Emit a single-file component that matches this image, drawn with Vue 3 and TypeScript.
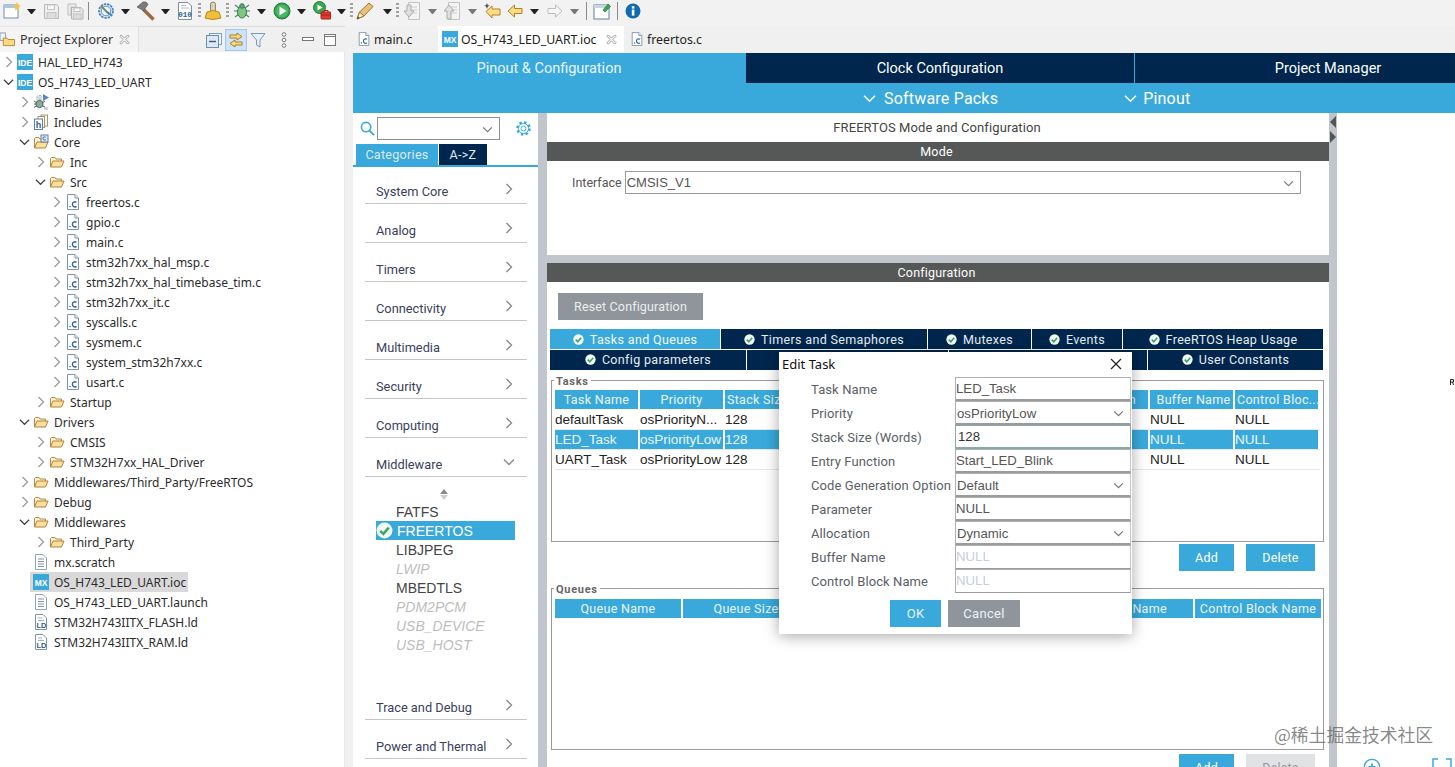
<script setup lang="ts">
const raw: [string, number, number?, number?][] = [
  ['i-new', 12, 18, 18], ['arrow', 31], ['i-save', 51, 17, 17], ['i-saveall', 75, 17, 17], ['sep', 88],
  ['i-cfg', 106, 18, 18], ['arrow', 125], ['i-hammer', 146, 20, 20], ['arrow', 165], ['i-bin', 185, 16, 18], ['dots', 199],
  ['i-lamp', 213, 18, 20], ['dots', 227], ['i-bug', 242, 18, 18], ['arrow', 261], ['i-run', 282, 18, 18], ['arrow', 301],
  ['i-ext', 322, 18, 20], ['arrow', 341], ['dots', 351], ['i-pencil', 365, 18, 18], ['arrow', 387], ['dots', 397],
  ['i-down', 412, 16, 18], ['arrow-off', 432], ['i-up', 452, 16, 18], ['arrow-off', 472], ['i-backstar', 492, 18, 16],
  ['i-back', 515, 16, 14], ['arrow', 534], ['i-fwd', 555, 16, 14], ['arrow-off', 574], ['sep', 586], ['i-win', 602, 18, 18], ['sep', 617], ['i-info', 633, 16, 16],
]
let prev = 0
const tools = raw.map(([id, x, w, h]) => {
  const kind = id.startsWith('arrow') ? id : id === 'sep' ? 'sep' : id === 'dots' ? 'dots' : 'icon'
  const width = kind === 'icon' ? (w as number) : kind === 'sep' ? 1 : kind === 'dots' ? 3 : 9
  const ml = x - width / 2 - prev
  prev = x + width / 2
  return { id, kind, width, height: h ?? 14, ml }
})

const viewIcons = [
  { id: 'i-collapse', on: false }, { id: 'i-link', on: true }, { id: 'i-filter', on: false },
  { id: 'i-kebab', on: false }, { id: 'i-min', on: false }, { id: 'i-max', on: false },
]

type Row = [number, string, string, string, boolean?]
const tree: Row[] = [
  [0, 'c', 'i-ide', 'HAL_LED_H743'], [0, 'o', 'i-ide', 'OS_H743_LED_UART'],
  [1, 'c', 'i-binaries', 'Binaries'], [1, 'c', 'i-includes', 'Includes'], [1, 'o', 'i-srcfolder', 'Core'],
  [2, 'c', 'i-folder', 'Inc'], [2, 'o', 'i-folder', 'Src'],
  [3, 'c', 'i-cfile', 'freertos.c'], [3, 'c', 'i-cfile', 'gpio.c'], [3, 'c', 'i-cfile', 'main.c'],
  [3, 'c', 'i-cfile', 'stm32h7xx_hal_msp.c'], [3, 'c', 'i-cfile', 'stm32h7xx_hal_timebase_tim.c'],
  [3, 'c', 'i-cfile', 'stm32h7xx_it.c'], [3, 'c', 'i-cfile', 'syscalls.c'], [3, 'c', 'i-cfile', 'sysmem.c'],
  [3, 'c', 'i-cfile', 'system_stm32h7xx.c'], [3, 'c', 'i-cfile', 'usart.c'],
  [2, 'c', 'i-folder', 'Startup'], [1, 'o', 'i-folder', 'Drivers'],
  [2, 'c', 'i-folder', 'CMSIS'], [2, 'c', 'i-folder', 'STM32H7xx_HAL_Driver'],
  [1, 'c', 'i-folder', 'Middlewares/Third_Party/FreeRTOS'], [1, 'c', 'i-folder', 'Debug'], [1, 'o', 'i-folder', 'Middlewares'],
  [2, 'c', 'i-folder', 'Third_Party'],
  [1, 'n', 'i-doc', 'mx.scratch'], [1, 'n', 'i-mx', 'OS_H743_LED_UART.ioc', true], [1, 'n', 'i-doc', 'OS_H743_LED_UART.launch'],
  [1, 'n', 'i-ld', 'STM32H743IITX_FLASH.ld'], [1, 'n', 'i-ld', 'STM32H743IITX_RAM.ld'],
]

const catsTop = ['System Core', 'Analog', 'Timers', 'Connectivity', 'Multimedia', 'Security', 'Computing']
const mids = [
  { t: 'FATFS', s: '' }, { t: 'FREERTOS', s: 'sel' }, { t: 'LIBJPEG', s: '' }, { t: 'LWIP', s: 'off' },
  { t: 'MBEDTLS', s: '' }, { t: 'PDM2PCM', s: 'off' }, { t: 'USB_DEVICE', s: 'off' }, { t: 'USB_HOST', s: 'off' },
]
const tabs1 = [
  { t: 'Tasks and Queues', w: 170, on: true }, { t: 'Timers and Semaphores', w: 206 }, { t: 'Mutexes', w: 103 },
  { t: 'Events', w: 90 }, { t: 'FreeRTOS Heap Usage', w: 200 },
]
const tabs2 = [{ t: 'Config parameters', w: 196 }, { t: '', w: 201 }, { t: '', w: 198 }, { t: 'User Constants', w: 175 }]

const taskHead = ['Task Name', 'Priority', 'Stack Size', '', '', '', 'Allocation', 'Buffer Name', 'Control Bloc...']
const taskRows = [
  ['defaultTask', 'osPriorityN...', '128', '', '', '', '', 'NULL', 'NULL'],
  ['LED_Task', 'osPriorityLow', '128', '', '', '', '', 'NULL', 'NULL'],
  ['UART_Task', 'osPriorityLow', '128', '', '', '', '', 'NULL', 'NULL'],
]
const queueHead = ['Queue Name', 'Queue Size', '', '', 'Buffer Name', 'Control Block Name']
const form = [
  { l: 'Task Name', v: 'LED_Task', k: 'input' }, { l: 'Priority', v: 'osPriorityLow', k: 'select' },
  { l: 'Stack Size (Words)', v: '128', k: 'focus' }, { l: 'Entry Function', v: 'Start_LED_Blink', k: 'input' },
  { l: 'Code Generation Option', v: 'Default', k: 'select' }, { l: 'Parameter', v: 'NULL', k: 'input' },
  { l: 'Allocation', v: 'Dynamic', k: 'select' }, { l: 'Buffer Name', v: 'NULL', k: 'dim' },
  { l: 'Control Block Name', v: 'NULL', k: 'dim' },
]
</script>

<template>
  <div class="root">
    <svg class="defs" width="0" height="0" aria-hidden="true">
      <defs>
        <symbol id="chev" viewBox="0 0 12 8"><path d="M1 1.5 6 6.5 11 1.5" fill="none" stroke="currentColor" stroke-width="1.3"/></symbol>
        <symbol id="chevr" viewBox="0 0 8 12"><path d="M1.5 1 6.5 6 1.5 11" fill="none" stroke="currentColor" stroke-width="1.3"/></symbol>
        <symbol id="i-close" viewBox="0 0 12 12"><path d="M1 2.500 2.500 1 6 4.500 9.500 1 11 2.500 7.500 6 11 9.500 9.500 11 6 7.500 2.500 11 1 9.500 4.500 6Z" fill="#fff" stroke="#8a8a8a" stroke-width=".9"/></symbol>
        <symbol id="i-ide" viewBox="0 0 16 16"><rect width="16" height="16" fill="#39a9dc"/><text x="8" y="11.5" font-size="8.5" font-weight="700" fill="#fff" text-anchor="middle" font-family="Liberation Sans">IDE</text></symbol>
        <symbol id="i-mx" viewBox="0 0 16 16"><rect width="16" height="16" fill="#39a9dc"/><text x="8" y="11.5" font-size="8.5" font-weight="700" fill="#fff" text-anchor="middle" font-family="Liberation Sans">MX</text></symbol>
        <symbol id="i-folder" viewBox="0 0 16 16"><path d="M1.5 13V4.5L2.5 3.5H6L7 5H12.5V7" fill="#fdf2cf" stroke="#b08a46"/><path d="M1.5 13 4 7H15L12.5 13Z" fill="#fbdf9c" stroke="#b5803a"/></symbol>
        <symbol id="i-srcfolder" viewBox="0 0 16 16"><path d="M1.5 13V4.5L2.5 3.5H6L7 5H12.5V7" fill="#fdf2cf" stroke="#b08a46"/><path d="M1.5 14 4 8H15L12.5 14Z" fill="#fbdf9c" stroke="#b5803a"/><rect x="8" y="1" width="7" height="7" fill="#dfe9f5" stroke="#5c7fa8"/><path d="M12.7 3.2C11 2.4 10 3.4 10 4.5S11 6.6 12.7 5.8" fill="none" stroke="#2d5f9a"/></symbol>
        <symbol id="i-cfile" viewBox="0 0 16 16"><path d="M2.5 .5H10L13.5 4V15.5H2.5Z" fill="#fff" stroke="#7f93ab"/><path d="M10 .5V4H13.5" fill="#e6ecf3" stroke="#7f93ab"/><circle cx="5" cy="12.5" r=".8" fill="#3a6fb0"/><path d="M11.5 8.3C9.5 7.2 7.4 8 7.4 10.3S9.5 13.5 11.5 12.5" fill="none" stroke="#2f63a8" stroke-width="1.4"/></symbol>
        <symbol id="i-doc" viewBox="0 0 16 16"><path d="M2.5 .5H10L13.5 4V15.5H2.5Z" fill="#fff" stroke="#8ea2b8"/><path d="M5 5H11M5 7.5H11M5 10H11M5 12.5H11" stroke="#7f93ab"/></symbol>
        <symbol id="i-ld" viewBox="0 0 16 16"><path d="M2.5 .5H10L13.5 4V15.5H2.5Z" fill="#fff" stroke="#7f93ab"/><path d="M5 4H9M5 6.5H11" stroke="#9fb0c2"/><text x="8.5" y="14" font-size="7.5" font-weight="700" fill="#2f5d8a" text-anchor="middle" font-family="Liberation Sans">LD</text></symbol>
        <symbol id="i-binaries" viewBox="0 0 16 16"><path d="M4 1.5 4 6M6 1.5H8V6H6Z" stroke="#8aa" fill="none" stroke-width=".8"/><path d="M10 0 16 3.5 10 7Z" fill="#5b88b5"/><circle cx="6.5" cy="10" r="3.6" fill="#8fa7a0" stroke="#4c6a62"/><path d="M1 7 4 9M1 10H3M1 13.5 4 11.5M12 7 9 9M12 13 9 11.5" stroke="#4c6a62"/><path d="M12 13V16M14 13V16" stroke="#99a" stroke-width=".9"/></symbol>
        <symbol id="i-includes" viewBox="0 0 16 16"><rect x="8" y="1" width="6.5" height="11" fill="#fff" stroke="#a49468"/><rect x="5" y="2.5" width="6.5" height="11" fill="#fff" stroke="#a49468"/><rect x="1.5" y="5" width="8" height="10.5" fill="#fff" stroke="#5c7fa8"/><text x="5.5" y="14" font-size="9" font-weight="700" fill="#2f5d8a" text-anchor="middle" font-family="Liberation Sans">h</text></symbol>
        <symbol id="i-new" viewBox="0 0 18 18"><rect x="1" y="3" width="14" height="13" fill="#fff" stroke="#6d8eb1"/><rect x="1" y="3" width="14" height="3" fill="#a9c6e4"/><path d="M14 0 15.2 3 18 3.6 15.6 5.6 16.2 8.4 14 7 11.8 8.4 12.4 5.6 10 3.6 12.8 3Z" fill="#f3c64a"/></symbol>
        <symbol id="i-save" viewBox="0 0 17 17"><path d="M1.5 1.5H13.5L15.5 3.5V15.5H1.5Z" fill="#eee" stroke="#b9b9b9"/><rect x="4.5" y="2" width="7" height="4.5" fill="#f8f8f8" stroke="#c4c4c4"/><rect x="4" y="9.5" width="9" height="6" fill="#ddd" stroke="#c4c4c4"/></symbol>
        <symbol id="i-saveall" viewBox="0 0 17 17"><path d="M1 1H9V4H4V12H1Z" fill="#eee" stroke="#bdbdbd"/><path d="M4.5 4.5H14L16 6.5V16H4.5Z" fill="#e8e8e8" stroke="#b4b4b4"/><rect x="7" y="5" width="6" height="3.5" fill="#f7f7f7" stroke="#c4c4c4"/><rect x="6.5" y="11" width="7.5" height="5" fill="#ddd" stroke="#c4c4c4"/></symbol>
        <symbol id="i-cfg" viewBox="0 0 18 18"><circle cx="9" cy="9" r="7" fill="#cfe3f2" stroke="#3b7fb5" stroke-width="1.6" stroke-dasharray="2.4 1"/><circle cx="9" cy="9" r="4.8" fill="#eef6fb" stroke="#5d9ac8"/><path d="M4 4 11 11" stroke="#8a7f6a" stroke-width="2"/><path d="M10 10 14 13" stroke="#4c7ea6" stroke-width="2"/></symbol>
        <symbol id="i-hammer" viewBox="0 0 20 20"><path d="M7 8 17.5 18.5" stroke="#9a6a3a" stroke-width="3.4"/><path d="M1 6 7 1H10L12 3.5 7.5 9.5Z" fill="#7d7d7d" stroke="#555" stroke-width=".7"/></symbol>
        <symbol id="i-bin" viewBox="0 0 16 18"><path d="M1.5 .5H11L14.5 4V17.5H1.5Z" fill="#fff" stroke="#7f8da0"/><path d="M4 3.5H9M4 6H12" stroke="#aebccb"/><text x="8" y="15" font-size="7.5" font-weight="700" fill="#2b6193" text-anchor="middle" font-family="Liberation Mono">010</text></symbol>
        <symbol id="i-lamp" viewBox="0 0 18 20"><rect x="6.5" y="1" width="5" height="12" rx="2.4" fill="#d9d2bb" stroke="#8d8468"/><path d="M1 17 3 11Q9 8 15 11L17 17Q9 20 1 17Z" fill="#f1bd3a" stroke="#b98a1e"/></symbol>
        <symbol id="i-bug" viewBox="0 0 18 18"><path d="M2 3 6 6M16 3 12 6M1 9H5M17 9H13M2 15 6 12M16 15 12 12" stroke="#4d7f6d" stroke-width="1.1"/><ellipse cx="9" cy="10" rx="4.5" ry="6" fill="#7fc77a" stroke="#3a7a5a"/><circle cx="9" cy="4" r="2.3" fill="#5ea877" stroke="#3a7a5a"/></symbol>
        <symbol id="i-run" viewBox="0 0 18 18"><circle cx="9" cy="9" r="8" fill="#35a04f" stroke="#237a39"/><circle cx="9" cy="9" r="6.3" fill="#49b863"/><path d="M6.5 4.5 13.5 9 6.5 13.5Z" fill="#fff"/></symbol>
        <symbol id="i-ext" viewBox="0 0 18 20"><circle cx="6.5" cy="6.5" r="6" fill="#3aa755" stroke="#237a39"/><path d="M4.5 3.5 9.5 6.5 4.5 9.5Z" fill="#fff"/><rect x="8" y="11" width="10" height="7" rx="1" fill="#e13b30" stroke="#a52219"/><path d="M11 11V9.5H15V11M8 14H18" stroke="#a52219" fill="none"/></symbol>
        <symbol id="i-pencil" viewBox="0 0 18 18"><path d="M1 17 3.5 10 13 1 17 4.5 8 14Z" fill="#e9c07b" stroke="#9d7634"/><path d="M1 17 3.5 10 8 14Z" fill="#f5e6c9" stroke="#9d7634"/><path d="M1 17 2 14.5 3.5 16Z" fill="#444"/></symbol>
        <symbol id="i-down" viewBox="0 0 16 18"><path d="M4.5 .5H15.5V17.5H4.5Z" fill="#f4f4f4" stroke="#c2c2c2"/><path d="M7 5H13M7 8H13M7 11H13" stroke="#ccc"/><path d="M3 3H7V9H10L5 15 0 9H3Z" fill="#e0e0e0" stroke="#ababab"/></symbol>
        <symbol id="i-up" viewBox="0 0 16 18"><path d="M4.5 .5H15.5V17.5H4.5Z" fill="#f4f4f4" stroke="#c2c2c2"/><path d="M7 5H13M7 8H13M7 11H13" stroke="#ccc"/><path d="M3 17V9H0L5 3 10 9H7V17Z" fill="#e0e0e0" stroke="#ababab"/></symbol>
        <symbol id="i-backstar" viewBox="0 0 18 16"><path d="M3 8.5 9 3V6H17V12H9V15Z" fill="#fbdc85" stroke="#b28325"/><path d="M4 0 4.8 2.2 7 2.8 4.8 3.6 4 6 3.2 3.6 1 2.8 3.2 2.2Z" fill="#444"/></symbol>
        <symbol id="i-back" viewBox="0 0 16 14"><path d="M1 7 7.5 1V4.5H15V9.5H7.5V13Z" fill="#fbdc85" stroke="#b28325"/></symbol>
        <symbol id="i-fwd" viewBox="0 0 16 14"><path d="M15 7 8.5 1V4.5H1V9.5H8.5V13Z" fill="#f7f7f7" stroke="#bdbdbd"/></symbol>
        <symbol id="i-win" viewBox="0 0 18 18"><rect x="1" y="3" width="15" height="14" fill="#fff" stroke="#5f7f9f"/><rect x="1" y="3" width="15" height="3" fill="#c3d5e8"/><path d="M10 8 15 2 17.5 4.5 12 10Z" fill="#3fa64f" stroke="#267a36" stroke-width=".7"/></symbol>
        <symbol id="i-info" viewBox="0 0 16 16"><circle cx="8" cy="8" r="7.5" fill="#0f6cb0"/><rect x="6.8" y="6.6" width="2.6" height="6" fill="#fff"/><rect x="6.8" y="3.2" width="2.6" height="2.4" fill="#fff"/></symbol>
        <symbol id="i-explorer" viewBox="0 0 16 16"><rect x="0" y="1" width="6" height="8" fill="#eef2f6" stroke="#8b9bab"/><path d="M3.5 14.5V6.5H7.5L8.5 8H15.5V14.5Z" fill="#fbd97f" stroke="#b5873a"/></symbol>
        <symbol id="i-collapse" viewBox="0 0 16 16"><rect x="3.5" y="1.5" width="12" height="11" fill="#eef4fa" stroke="#7c9cbc"/><rect x=".5" y="3.5" width="12" height="12" fill="#dce9f5" stroke="#6b8fb2"/><path d="M3 9.5H10" stroke="#2d5f8e" stroke-width="1.4"/></symbol>
        <symbol id="i-link" viewBox="0 0 16 16"><path d="M9 1 14 4.5 9 8V6H2V3H9Z" fill="#fbdc85" stroke="#a9802c"/><path d="M7 8 2 11.5 7 15V13H14V10H7Z" fill="#fbdc85" stroke="#a9802c"/></symbol>
        <symbol id="i-filter" viewBox="0 0 16 16"><path d="M1 1.5H15L10 8V15L6.5 13V8Z" fill="#e6eff7" stroke="#7d99b3"/></symbol>
        <symbol id="i-kebab" viewBox="0 0 6 16"><circle cx="3" cy="2.5" r="1.8" fill="#fff" stroke="#777"/><circle cx="3" cy="8" r="1.8" fill="#fff" stroke="#777"/><circle cx="3" cy="13.5" r="1.8" fill="#fff" stroke="#777"/></symbol>
        <symbol id="i-min" viewBox="0 0 12 6"><rect x=".5" y=".5" width="11" height="3" fill="#fff" stroke="#777"/></symbol>
        <symbol id="i-max" viewBox="0 0 12 12"><rect x=".5" y=".5" width="11" height="11" fill="#fff" stroke="#777"/><path d="M.5 2.5H11.5" stroke="#777"/></symbol>
        <symbol id="i-check" viewBox="0 0 12 12"><circle cx="6" cy="6" r="5.6" fill="#f4faf6"/><path d="M3 6.2 5.2 8.4 9 4" fill="none" stroke="#3fa66a" stroke-width="1.8"/></symbol>
        <symbol id="i-search" viewBox="0 0 16 16"><circle cx="6.5" cy="6.5" r="5" fill="none" stroke="#39a9dc" stroke-width="1.7"/><path d="M10.2 10.2 15 15" stroke="#39a9dc" stroke-width="2"/></symbol>
        <symbol id="i-gear" viewBox="0 0 18 18"><circle cx="9" cy="9" r="6.4" fill="none" stroke="#39a9dc" stroke-width="2.6" stroke-dasharray="2.6 2.4"/><circle cx="9" cy="9" r="5.3" fill="none" stroke="#39a9dc"/><circle cx="9" cy="9" r="2.6" fill="none" stroke="#39a9dc"/></symbol>
      </defs>
    </svg>

    <header class="toolbar">
      <template v-for="(t, i) in tools" :key="i">
        <svg v-if="t.kind === 'icon'" class="tool" :style="{ marginLeft: t.ml + 'px', width: t.width + 'px', height: t.height + 'px' }"><use :href="'#' + t.id"/></svg>
        <span v-else :class="['tool-' + t.kind]" :style="{ marginLeft: t.ml + 'px' }"></span>
      </template>
    </header>

    <div class="body">
      <aside class="explorer">
        <div class="view-head">
          <div class="view-tab">
            <svg class="view-ico"><use href="#i-explorer"/></svg>
            <span>Project Explorer</span>
            <svg class="x"><use href="#i-close"/></svg>
          </div>
          <div class="view-tools">
            <span v-for="v in viewIcons" :key="v.id" :class="['vt', v.id, { on: v.on }]"><svg><use :href="'#' + v.id"/></svg></span>
          </div>
        </div>
        <div class="tree">
          <div v-for="r in tree" :key="r[3]" :class="['row', 'lvl' + r[0]]">
            <svg v-if="r[1] === 'c'" class="tw closed"><use href="#chevr"/></svg>
            <svg v-else-if="r[1] === 'o'" class="tw open"><use href="#chev"/></svg>
            <span v-else class="tw"></span>
            <span :class="['cell', { picked: r[4] }]">
              <svg class="ti"><use :href="'#' + r[2]"/></svg>
              <span class="tl">{{ r[3] }}</span>
            </span>
          </div>
        </div>
      </aside>

      <main class="editor">
        <nav class="ed-tabs">
          <div class="ed-tab t-main"><svg class="ti"><use href="#i-cfile"/></svg>main.c</div>
          <div class="ed-tab t-ioc"><svg class="ti"><use href="#i-mx"/></svg>OS_H743_LED_UART.ioc<svg class="x"><use href="#i-close"/></svg></div>
          <div class="ed-tab t-free"><svg class="ti"><use href="#i-cfile"/></svg>freertos.c</div>
        </nav>

        <div class="mx-head">
          <div class="mx-top">
            <div class="mx-t a1">Pinout &amp; Configuration</div>
            <div class="mx-t a2">Clock Configuration</div>
            <div class="mx-t a3">Project Manager</div>
          </div>
          <div class="mx-sub">
            <span class="sp1"><svg class="mxc"><use href="#chev"/></svg>Software Packs</span>
            <span class="sp2"><svg class="mxc"><use href="#chev"/></svg>Pinout</span>
          </div>
        </div>

        <div class="mx-body">
          <section class="side">
            <div class="search">
              <svg class="s-ico"><use href="#i-search"/></svg>
              <div class="s-box"><svg class="s-chev"><use href="#chev"/></svg></div>
              <svg class="s-gear"><use href="#i-gear"/></svg>
            </div>
            <div class="cat-tabs">
              <span class="cat on">Categories</span>
              <span class="cat">A-&gt;Z</span>
            </div>
            <div class="cat-list">
              <div v-for="c in catsTop" :key="c" class="cat-item">{{ c }}<svg class="cchev"><use href="#chevr"/></svg></div>
              <div class="cat-item">Middleware<svg class="cchev2"><use href="#chev"/></svg></div>
              <div class="mid">
                <div class="sort"><i></i><i></i></div>
                <div v-for="m in mids" :key="m.t" :class="['mid-row', m.s]">
                  <svg v-if="m.s === 'sel'" class="mid-check"><use href="#i-check"/></svg>{{ m.t }}
                </div>
              </div>
              <div class="cat-item">Trace and Debug<svg class="cchev"><use href="#chevr"/></svg></div>
              <div class="cat-item">Power and Thermal<svg class="cchev"><use href="#chevr"/></svg></div>
            </div>
          </section>

          <div class="split"></div>

          <section class="center">
            <div class="title">FREERTOS Mode and Configuration</div>
            <div class="bar">Mode</div>
            <div class="mode">
              <span class="if-l">Interface</span>
              <div class="if-sel">CMSIS_V1<svg class="s-chev"><use href="#chev"/></svg></div>
            </div>
            <div class="bar cfg">Configuration</div>
            <div class="config">
              <button class="reset">Reset Configuration</button>
              <div class="tabs">
                <div class="tabrow">
                  <div v-for="t in tabs1" :key="t.t" :class="['tb', { on: t.on }]" :style="{ width: t.w + 'px' }">
                    <svg class="tb-c"><use href="#i-check"/></svg>{{ t.t }}
                  </div>
                </div>
                <div class="tabrow r2">
                  <div v-for="(t, i) in tabs2" :key="i" class="tb" :style="{ width: t.w + 'px' }">
                    <svg v-if="t.t" class="tb-c"><use href="#i-check"/></svg>{{ t.t }}
                  </div>
                </div>
              </div>

              <fieldset class="fs fs-t">
                <legend>Tasks</legend>
                <div class="grid g9">
                  <div v-for="(h, i) in taskHead" :key="i" class="gh">{{ h }}</div>
                </div>
                <div v-for="(r, i) in taskRows" :key="i" :class="['grid', 'g9', 'gr', { sel: i === 1 }]">
                  <div v-for="(c, j) in r" :key="j" class="gc">{{ c }}</div>
                </div>
              </fieldset>
              <div class="btns">
                <button class="btn add">Add</button>
                <button class="btn del">Delete</button>
              </div>

              <fieldset class="fs fs-q">
                <legend>Queues</legend>
                <div class="grid g6">
                  <div v-for="(h, i) in queueHead" :key="i" class="gh">{{ h }}</div>
                </div>
              </fieldset>
              <div class="btns b2">
                <button class="btn add">Add</button>
                <button class="btn del off">Delete</button>
              </div>
            </div>
          </section>

          <div class="split2"><i class="tl1"></i><i class="tr1"></i></div>

          <section class="pinout">
            <svg class="pin-mark" viewBox="0 0 4 6"><path d="M.5 6V.5H3.500V3H.5M2.500 3 3.500 6" fill="none" stroke="#222"/></svg>
            <div class="pin-tools">
              <svg class="zoom-ic" viewBox="0 0 20 20"><circle cx="10" cy="10" r="8.500" fill="none" stroke="#39a9dc" stroke-width="1.500"/><path d="M10 6V14M6 10H14" stroke="#39a9dc" stroke-width="2"/></svg>
              <svg class="fit-ic" viewBox="0 0 20 12"><path d="M1 10V1H6M14 1H19V10" fill="none" stroke="#39a9dc" stroke-width="1.500"/></svg>
            </div>
          </section>
        </div>
      </main>
    </div>

    <div class="dialog">
      <div class="d-title">Edit Task<svg class="d-x" viewBox="0 0 12 12"><path d="M1 1 11 11M11 1 1 11" stroke="#222" stroke-width="1.200"/></svg></div>
      <div class="d-form">
        <template v-for="f in form" :key="f.l">
          <label class="d-l">{{ f.l }}</label>
          <div :class="['d-f', f.k]">{{ f.v }}<svg v-if="f.k === 'select'" class="d-chev"><use href="#chev"/></svg></div>
        </template>
      </div>
      <div class="d-btns">
        <button class="d-ok">OK</button>
        <button class="d-cancel">Cancel</button>
      </div>
    </div>

    <div class="watermark">@稀土掘金技术社区</div>
  </div>
</template>

<style>
html, body { margin: 0; padding: 0; overflow: hidden; background: #f0f0f0; }
</style>

<style scoped>
* { box-sizing: border-box; }
.root { position: relative; width: 1455px; height: 767px; overflow: hidden; background: #f0f0f0; display: flex; flex-direction: column; font-family: "Liberation Sans", Arial, sans-serif; color: #222; }
.defs { position: absolute; }
svg { display: block; flex: none; }

.toolbar { height: 26px; display: flex; align-items: center; background: #f2f2f2; flex: none; padding-bottom: 4px; }
.tool { flex: none; }
.tool-arrow, .tool-arrow-off { width: 9px; height: 0; border: 4.500px solid transparent; border-top: 5px solid #222; border-bottom: 0; flex: none; margin-top: 1px; }
.tool-arrow-off { border-top-color: #777; }
.tool-sep { width: 1px; height: 18px; background: #8a8a8a; flex: none; }
.tool-dots { width: 3px; height: 16px; flex: none; background: repeating-linear-gradient(to bottom, #a0a0a0 0 2px, transparent 2px 4px); }

.body { flex: 1; display: flex; min-height: 0; }
.explorer { width: 345px; margin-right: 8px; display: flex; flex-direction: column; flex: none; background: #fff; }
.view-head { height: 26px; display: flex; flex: none; background: #f0f0f0; }
.view-tab { width: 138px; background: #f5f5f5; display: flex; align-items: center; font: 12.500px "Noto Sans", sans-serif; color: #333; padding-right: 8px; border-top: 1px solid #e4e4e4; }
.view-ico { width: 15px; height: 15px; margin: 0 5px 0 0; }
.view-tab .x, .ed-tab .x { margin-left: auto; width: 11px; height: 11px; }
.view-tools { flex: 1; display: flex; align-items: center; border-top: 1px solid #dcdcdc; border-left: 1px solid #e0e0e0; padding-left: 64px; }
.vt { display: flex; align-items: center; justify-content: center; height: 22px; }
.vt svg { width: 16px; height: 16px; }
.vt.on { background: #cde3f7; border: 1px solid #a5c8ea; }
.i-collapse { width: 22px; }
.i-link { width: 22px; }
.i-filter { width: 22px; }
.i-kebab { margin-left: 12px; width: 6px; }
.i-kebab svg { width: 6px; height: 16px; }
.i-min { margin-left: 15px; width: 12px; }
.i-min svg { width: 12px; height: 6px; }
.i-max { margin-left: 10px; width: 12px; }
.i-max svg { width: 12px; height: 12px; }

.tree { flex: 1; border-right: 1px solid #e6e6e6; font: 12px "Noto Sans", sans-serif; color: #2b2b2b; overflow: hidden; }
.row { height: 20px; display: flex; align-items: center; }
.lvl0 { padding-left: 3px; }
.lvl1 { padding-left: 19px; }
.lvl2 { padding-left: 35px; }
.lvl3 { padding-left: 51px; }
.tw { width: 14px; height: 12px; flex: none; }
.tw.closed { width: 8px; margin-left: 2px; margin-right: 4px; color: #9a9a9a; }
.tw.open { width: 11px; margin-right: 3px; height: 8px; color: #444; }
.cell { display: flex; align-items: center; height: 20px; }
.ti { width: 16px; height: 16px; margin-right: 5px; flex: none; }
.picked { background: #d9d9d9; margin-left: -3px; padding-left: 3px; padding-right: 2px; }
.tl { white-space: nowrap; }

.editor { flex: 1; display: flex; flex-direction: column; min-width: 0; }
.ed-tabs { height: 27px; display: flex; flex: none; font: 12.300px "Noto Sans", sans-serif; color: #222; background: #f0f0f0; }
.ed-tab { display: flex; align-items: center; height: 26px; }
.ed-tab .ti { margin-right: 3px; width: 14px; height: 14px; }
.t-main { width: 85px; background: #f0f0f0; padding-left: 4px; }
.t-ioc { width: 186px; background: #fff; padding: 0 7px 0 4px; }
.t-ioc .ti { width: 16px; height: 16px; margin-right: 3px; }
.t-free { padding-left: 6px; }

.mx-head { flex: none; height: 60px; background: #39a9dc; color: #fff; }
.mx-top { display: flex; height: 30px; font: 14.500px Roboto, sans-serif; }
.mx-t { display: flex; align-items: center; justify-content: center; background: #00264d; }
.a1 { width: 392px; background: #39a9dc; color: #e8f6fc; }
.a2 { width: 388px; margin-left: 1px; }
.a3 { flex: 1; margin-left: 1px; padding-left: 66px; }
.mx-sub { height: 30px; display: flex; align-items: center; font: 16px Roboto, sans-serif; letter-spacing: .2px; }
.mx-sub span { display: flex; align-items: center; }
.sp1 { margin-left: 510px; }
.sp2 { margin-left: 126px; }
.mxc { width: 13px; height: 9px; margin-right: 8px; color: #fff; }
.sp2 .mxc { margin-right: 6px; }

.mx-body { flex: 1; display: flex; min-height: 0; }
.side { width: 185px; flex: none; background: #fff; }
.search { height: 31px; display: flex; align-items: center; padding-left: 7px; }
.s-ico { width: 15px; height: 15px; }
.s-box { width: 123px; height: 23px; margin-left: 2px; border: 1px solid #8f8f8f; position: relative; background: #fff; }
.s-chev { position: absolute; right: 6px; top: 8px; width: 11px; height: 7px; color: #777; }
.s-gear { width: 17px; height: 17px; margin-left: 15px; }
.cat-tabs { height: 23px; display: flex; padding-left: 3px; border-bottom: 2px solid #39a9dc; gap: 1px; font: 12.500px Roboto, sans-serif; letter-spacing: .3px; }
.cat { width: 48px; height: 21px; background: #00264d; color: #dfe9f2; display: flex; align-items: center; justify-content: center; }
.cat.on { width: 82px; background: #39a9dc; }
.cat-list { margin-top: -2px; }
.cat-item { height: 39px; margin: 0 11px 0 12px; padding: 0 0 4px 11px; border-bottom: 1px solid #c6c6c6; display: flex; align-items: flex-end; position: relative; font: 12.800px Roboto, sans-serif; color: #3a3f5c; }
.cchev { position: absolute; right: 14px; bottom: 8px; width: 8px; height: 12px; color: #888; }
.cchev2 { position: absolute; right: 12px; bottom: 10px; width: 12px; height: 8px; color: #888; }
.mid { height: 204px; padding: 12px 0 0 23px; font: 14px "Liberation Sans", sans-serif; color: #444; }
.sort { width: 9px; margin: 0 0 2px 64px; height: 11px; }
.sort i { display: block; width: 0; border: 4.500px solid transparent; border-top: 0; border-bottom: 5px solid #8a8a8a; margin-bottom: 1px; }
.sort i + i { border-bottom: 0; border-top: 5px solid #cfcfcf; }
.mid-row { height: 19px; width: 139px; padding-left: 20px; display: flex; align-items: center; position: relative; }
.mid-row.sel { background: #39a9dc; color: #fff; padding-left: 21px; }
.mid-row.off { color: #bdbdbd; font-style: italic; }
.mid-check { position: absolute; left: 0; top: 1px; width: 17px; height: 17px; }

.split { width: 9px; flex: none; background: #c0c6cb; }
.center { width: 782px; flex: none; background: #fff; overflow: hidden; }
.title { height: 29px; display: flex; align-items: center; justify-content: center; font: 13px Roboto, sans-serif; color: #444; letter-spacing: .1px; padding-right: 2px; }
.bar { height: 19px; background: #555857; color: #fff; text-align: center; font: 12.500px/19px Roboto, sans-serif; letter-spacing: .2px; padding-right: 3px; }
.mode { display: flex; align-items: flex-start; padding: 10px 0 0 25px; border-bottom: 8px solid #c0c6cb; font: 13px "Liberation Sans", sans-serif; color: #555; height: 102px; }
.if-l { font-family: Roboto, sans-serif; font-size: 12.500px; margin-right: 3px; height: 22px; line-height: 24px; }
.if-sel { width: 676px; height: 23px; border: 1px solid #9a9a9a; position: relative; padding: 2px 0 0 1px; line-height: 18px; }
.config { padding: 11px 0 0 3px; }
.reset { display: block; margin-left: 8px; width: 145px; height: 27px; background: #8f959a; border: 0; color: #eceeef; font: 12.500px Roboto, sans-serif; letter-spacing: .15px; padding: 0; }
.tabs { margin-top: 9px; width: 773px; }
.tabrow { display: flex; gap: 1px; margin-bottom: 1px; }
.tb { height: 20px; background: #00264d; color: #e6edf3; display: flex; align-items: center; justify-content: center; font: 12.500px Roboto, sans-serif; letter-spacing: .35px; }
.tb.on { background: #39a9dc; color: #f2fafd; }
.tb-c { width: 11px; height: 11px; margin-right: 6px; }
.r2 .tb { padding-bottom: 2px; }
.fs { margin: 0 0 0 1px; padding: 0 0 0 3px; width: 773px; border: 1px solid #9a9a9a; min-inline-size: auto; }
.fs legend { font: 700 11px/13px Roboto, sans-serif; color: #666; padding: 0 2px; margin-left: -1px; letter-spacing: .7px; height: 10px; }
.fs-t { margin-top: 5px; height: 167px; padding-top: 5px; }
.fs-q { margin-top: 8px; height: 167px; padding-top: 6px; }
.grid { display: grid; gap: 2px; }
.g9 { grid-template-columns: repeat(9, 83px); }
.g6 { grid-template-columns: repeat(6, 126px); }
.gh { height: 19px; margin-bottom: 1px; background: #39a9dc; color: #eaf6fc; display: flex; align-items: center; justify-content: center; white-space: nowrap; overflow: hidden; font: 12.500px Roboto, sans-serif; letter-spacing: .3px; }
.g9 .gh:nth-child(3), .g9 .gh:nth-child(9) { justify-content: flex-start; padding-left: 2px; }
.g9 .gh:nth-child(8) { padding-left: 4px; }
.gr { font: 13.500px "Liberation Sans", sans-serif; color: #222; height: 20px; border-bottom: 1px solid #e8e8e8; width: 765px; }
.gc { height: 19px; line-height: 19px; white-space: nowrap; overflow: hidden; }
.gr.sel { background: #39a9dc; color: #eaf6fc; }
.gr.sel .gc { box-shadow: 2px 0 0 #fff; }
.btns { height: 33px; display: flex; padding: 2px 0 0 629px; }
.b2 { padding-top: 4px; }
.btn { height: 27px; border: 0; font: 12.500px Roboto, sans-serif; letter-spacing: .2px; color: #fff; padding: 0; }
.add { width: 55px; background: #39a9dc; }
.del { width: 69px; margin-left: 12px; background: #39a9dc; }
.del.off { background: #e0e2e4; color: #999; }

.split2 { width: 8px; flex: none; background: #c0c6cb; padding-top: 3px; }
.split2 i { display: block; width: 0; border: 6px solid transparent; }
.split2 .tl1 { border-right: 6px solid #555; border-left: 0; margin: 0 0 3px 1px; }
.split2 .tr1 { border-left: 6px solid #555; border-right: 0; margin-left: 1px; }
.pinout { flex: 1; background: #fff; position: relative; }
.pin-mark { position: absolute; left: 113px; top: 266px; width: 4px; height: 6px; }
.pin-tools { display: flex; padding: 645px 0 0 26px; }
.zoom-ic { width: 18px; height: 18px; }
.fit-ic { width: 20px; height: 12px; margin-left: 51px; }

.dialog { position: absolute; left: 779px; top: 352px; width: 353px; height: 282px; background: #fff; box-shadow: 0 2px 14px rgba(0,0,0,.35); }
.d-title { height: 25px; display: flex; align-items: center; padding: 0 0 2px 3px; font: 13px "Noto Sans", sans-serif; color: #111; position: relative; }
.d-x { position: absolute; right: 10px; top: 6px; width: 12px; height: 12px; }
.d-form { display: grid; grid-template-columns: 144px 176px; grid-auto-rows: 24px; padding-left: 32px; }
.d-l { font: 13px/26px Roboto, sans-serif; letter-spacing: .1px; color: #5a6068; white-space: nowrap; }
.d-f { height: 24px; border: 1px solid #b0b0b0; border-bottom: 2px solid #9a9a9a; border-right-color: #c4c4c4; font: 13.200px/21px "Liberation Sans", sans-serif; color: #555; position: relative; }
.d-f.select { line-height: 23px; padding-left: 1px; }
.d-f.focus { color: #333; border-color: #8aa; padding-left: 2px; }
.d-f.dim { color: #c4cfdc; border-bottom: 1px solid #9a9a9a; }
.d-chev { position: absolute; right: 6px; top: 8px; width: 11px; height: 7px; color: #777; }
.d-btns { display: flex; padding: 7px 0 0 111px; gap: 7px; }
.d-ok, .d-cancel { height: 27px; border: 0; font: 13px Roboto, sans-serif; color: #e8f4fa; padding: 0; letter-spacing: .3px; }
.d-ok { width: 51px; background: #39a9dc; }
.d-cancel { width: 72px; background: #8f959a; }

.watermark { position: absolute; left: 1274px; top: 723px; font: 17.800px "Noto Sans CJK SC", sans-serif; color: rgba(90,90,90,.72); line-height: 22px; white-space: nowrap; }
</style>
